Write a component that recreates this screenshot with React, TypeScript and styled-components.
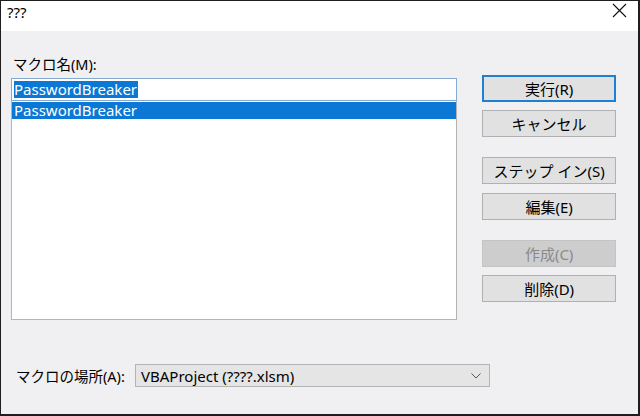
import styled, { createGlobalStyle } from 'styled-components';

const GlobalStyle = createGlobalStyle`
  html, body {
    margin: 0;
    padding: 0;
    background: #f0eff1;
  }
  * {
    box-sizing: border-box;
  }
`;

const Window = styled.div`
  width: 640px;
  height: 416px;
  display: flex;
  flex-direction: column;
  background: #f0eff1;
  border-top: 1px solid #1e1e1e;
  border-left: 1px solid #1e1e1e;
  border-right: 2px solid #1e1e1e;
  border-bottom: 2px solid #1e1e1e;
  font-family: "Noto Sans", "Noto Sans CJK JP", sans-serif;
  font-size: 14px;
  color: #000;
`;

const TitleBar = styled.div`
  height: 30px;
  background: #fff;
  display: flex;
  justify-content: space-between;
  align-items: flex-start;
  padding: 1px 11px 0 6px;
`;

const Title = styled.span`
  font-size: 15px;
  line-height: 20px;
`;

const CloseIcon = styled.svg`
  width: 15px;
  height: 15px;
  margin-top: 1px;
`;

const Body = styled.div`
  flex: 1;
  display: flex;
  flex-direction: column;
  padding: 23px 22px 27px 10px;
`;

const Main = styled.div`
  display: flex;
  gap: 25px;
`;

const LeftColumn = styled.div`
  width: 447px;
  display: flex;
  flex-direction: column;
`;

const Label = styled.label`
  line-height: 21px;
  padding-left: 2px;
  font-size: 14.5px;
`;

const NameInput = styled.div`
  margin-top: 3px;
  height: 23px;
  background: #fff;
  border: 1px solid #86a9cf;
  padding: 1px 2px;
  display: flex;
  align-items: center;
`;

const Highlight = styled.span`
  background: #0a78d4;
  color: #fff;
  line-height: 17px;
  font-size: 15px;
  padding-right: 1px;
`;

const List = styled.div`
  height: 219px;
  background: #fff;
  border: 1px solid #b4b4b4;
  border-top: none;
  padding-top: 1px;
  display: flex;
  flex-direction: column;
`;

const ListItem = styled.div<{ $selected?: boolean }>`
  height: 17px;
  line-height: 17px;
  font-size: 15px;
  padding-left: 2px;
  background: ${p => (p.$selected ? '#0a78d4' : 'transparent')};
  color: ${p => (p.$selected ? '#fff' : '#000')};
`;

const ButtonColumn = styled.div`
  width: 134px;
  margin-top: 21px;
  display: flex;
  flex-direction: column;
`;

const Button = styled.button<{ $primary?: boolean; $gap?: number }>`
  height: 27px;
  margin-top: ${p => p.$gap ?? 0}px;
  font-family: inherit;
  font-size: 15px;
  color: #000;
  background: #e1e1e1;
  border: ${p => (p.$primary ? '2px solid #1f7fd0' : '1px solid #b0b0b0')};
  padding: 0;
  cursor: default;

  &:disabled {
    background: #cdcdcd;
    border-color: #c4c4c4;
    color: #8a8a8a;
  }
`;

const LocationRow = styled.div`
  margin-top: auto;
  display: flex;
  align-items: center;
`;

const LocationLabel = styled.label`
  width: 124px;
  padding-left: 5px;
  font-size: 14.5px;
`;

const Select = styled.div`
  width: 355px;
  height: 23px;
  background: #e5e5e5;
  border: 1px solid #b4b4b4;
  display: flex;
  align-items: center;
  justify-content: space-between;
  padding: 0 8px 0 5px;
  font-size: 15px;
`;

const Chevron = styled.svg`
  width: 10px;
  height: 6px;
`;

export default function App() {
  return (
    <>
      <GlobalStyle />
      <Window>
        <TitleBar>
          <Title>???</Title>
          <CloseIcon viewBox="0 0 15 15">
            <path d="M1 1 L14 14 M14 1 L1 14" stroke="#111" strokeWidth="1.1" fill="none" />
          </CloseIcon>
        </TitleBar>
        <Body>
          <Main>
            <LeftColumn>
              <Label>マクロ名(M):</Label>
              <NameInput>
                <Highlight>PasswordBreaker</Highlight>
              </NameInput>
              <List>
                <ListItem $selected>PasswordBreaker</ListItem>
              </List>
            </LeftColumn>
            <ButtonColumn>
              <Button $primary>実行(R)</Button>
              <Button $gap={8}>キャンセル</Button>
              <Button $gap={20}>ステップ イン(S)</Button>
              <Button $gap={9}>編集(E)</Button>
              <Button $gap={20} disabled>作成(C)</Button>
              <Button $gap={8}>削除(D)</Button>
            </ButtonColumn>
          </Main>
          <LocationRow>
            <LocationLabel>マクロの場所(A):</LocationLabel>
            <Select>
              <span>VBAProject (????.xlsm)</span>
              <Chevron viewBox="0 0 10 6">
                <path d="M0.5 0.5 L5 5 L9.5 0.5" stroke="#555" strokeWidth="1" fill="none" />
              </Chevron>
            </Select>
          </LocationRow>
        </Body>
      </Window>
    </>
  );
}
